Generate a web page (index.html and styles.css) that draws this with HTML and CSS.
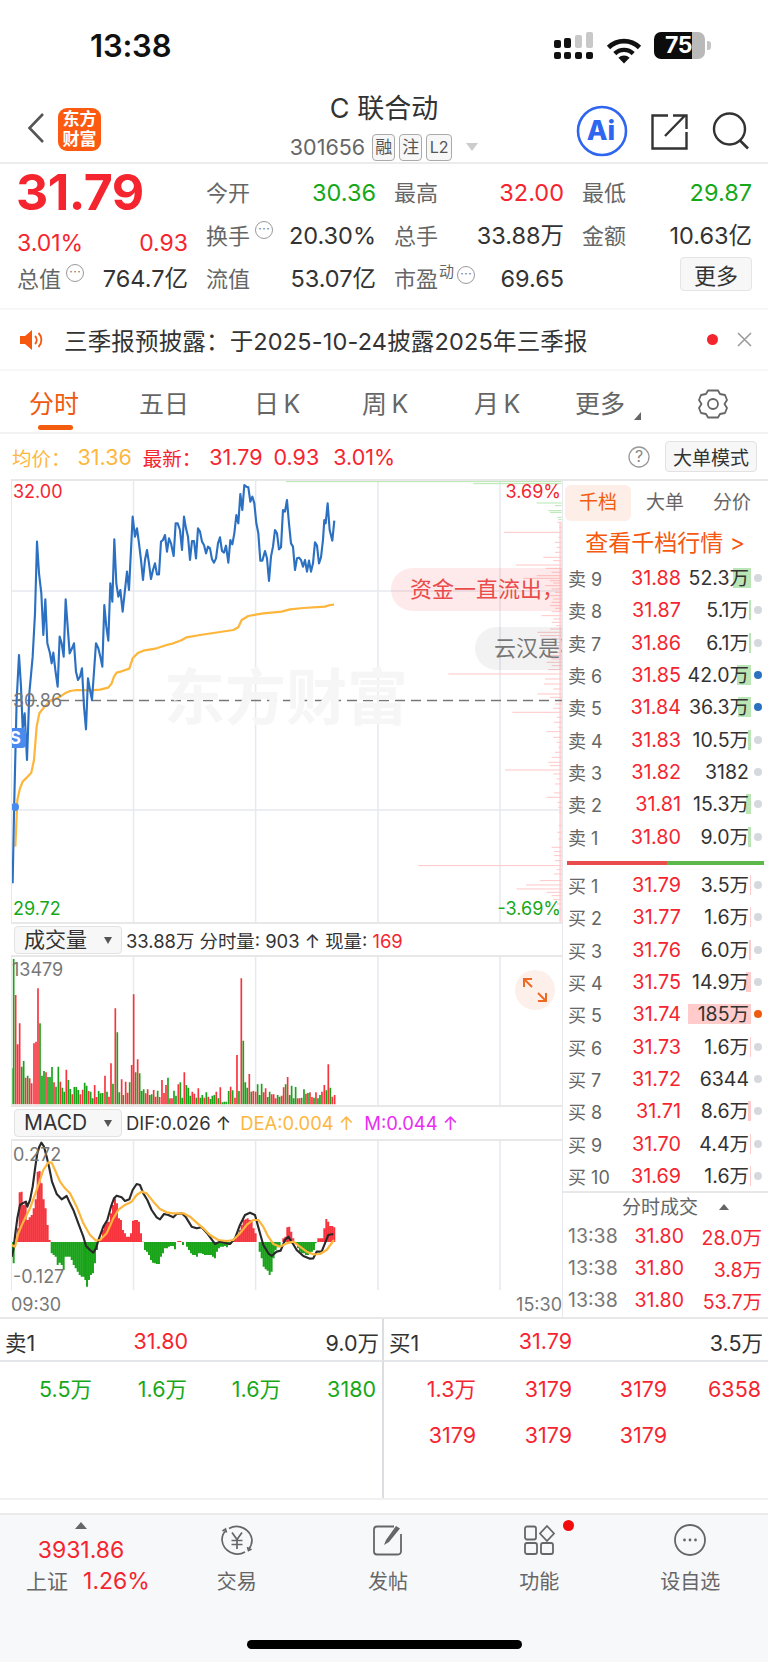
FILE: index.html
```html
<!DOCTYPE html>
<html lang="zh-CN">
<head>
<meta charset="utf-8">
<title>C联合动</title>
<link rel="stylesheet" href="styles.css">
</head>
<body>
<div class="page">

<header class="status">
  <div class="clock">13:38</div>
  <div class="status-icons">
    <svg class="signal" width="40" height="28" viewBox="0 0 40 28"><g fill="#111"><rect x="0" y="8" width="7" height="8" rx="2"/><rect x="10" y="6" width="7" height="10" rx="2"/><rect x="0" y="20" width="7" height="7" rx="2"/><rect x="10" y="20" width="7" height="7" rx="2"/><rect x="21" y="20" width="7" height="7" rx="2"/><rect x="32" y="20" width="7" height="7" rx="2"/></g><g fill="#c8c8c8"><rect x="21" y="3" width="7" height="13" rx="2"/><rect x="32" y="0" width="7" height="16" rx="2"/></g></svg>
    <svg class="wifi" width="36" height="26" viewBox="0 0 36 26"><path d="M2.500 9.500a22 22 0 0 1 31 0" fill="none" stroke="#111" stroke-width="4.600"/><path d="M8.800 15.600a13.200 13.200 0 0 1 18.400 0" fill="none" stroke="#111" stroke-width="4.400"/><path d="M18 25.500l-5.600-5.800a8 8 0 0 1 11.200 0z" fill="#111"/></svg>
    <div class="battery"><div class="battery-body"><span class="battery-num">75</span></div><i class="battery-nub"></i></div>
  </div>
</header>

<nav class="nav">
  <div class="nav-left">
    <svg class="back" width="18" height="32" viewBox="0 0 18 32"><path d="M16 2L2.500 16 16 30" fill="none" stroke="#555" stroke-width="2.600"/></svg>
    <div class="logo">东方<br>财富</div>
  </div>
  <div class="nav-title">
    <div class="title">C 联合动</div>
    <div class="subtitle"><span class="code">301656</span><span class="tag">融</span><span class="tag">注</span><span class="tag">L2</span><i class="sub-caret"></i></div>
  </div>
  <div class="nav-right">
    <svg class="ai" width="52" height="52" viewBox="0 0 52 52"><circle cx="26" cy="26" r="24" fill="#fff" stroke="#2f66f0" stroke-width="2.600"/><text x="25" y="35" text-anchor="middle" class="ai-text">Ai</text></svg>
    <svg class="share" width="37" height="37" viewBox="0 0 37 37"><path d="M17 2.500H1.500v33h34V19" fill="none" stroke="#333" stroke-width="2.400"/><path d="M14 23L33.500 3M22 2.500h13.500V16" fill="none" stroke="#333" stroke-width="2.400"/></svg>
    <svg class="search" width="38" height="38" viewBox="0 0 38 38"><circle cx="17.500" cy="17" r="15.500" fill="none" stroke="#333" stroke-width="2.400"/><path d="M28 28.500l8 8" fill="none" stroke="#333" stroke-width="2.600"/></svg>
  </div>
</nav>

<section class="quote">
  <div class="quote-left">
    <div class="big-price">31.79</div>
    <div class="change-row"><span>3.01%</span><span>0.93</span></div>
    <div class="q-cell cap-row"><span class="q-label">总值<i class="more-dot">⋯</i></span><span class="q-value">764.7亿</span></div>
  </div>
  <div class="quote-grid">
    <div class="q-cell"><span class="q-label">今开</span><span class="q-value up-green">30.36</span></div>
    <div class="q-cell"><span class="q-label">最高</span><span class="q-value down-red">32.00</span></div>
    <div class="q-cell"><span class="q-label">最低</span><span class="q-value up-green">29.87</span></div>
    <div class="q-cell"><span class="q-label">换手<i class="more-dot">⋯</i></span><span class="q-value">20.30%</span></div>
    <div class="q-cell"><span class="q-label">总手</span><span class="q-value">33.88万</span></div>
    <div class="q-cell"><span class="q-label">金额</span><span class="q-value">10.63亿</span></div>
    <div class="q-cell"><span class="q-label">流值</span><span class="q-value">53.07亿</span></div>
    <div class="q-cell"><span class="q-label">市盈<sup class="dyn">动</sup><i class="more-dot">⋯</i></span><span class="q-value">69.65</span></div>
    <div class="q-cell q-end"><button class="more-btn">更多</button></div>
  </div>
</section>

<section class="notice">
  <svg class="speaker" width="24" height="22" viewBox="0 0 24 22"><path d="M0 7h5l7-6v20l-7-6H0z" fill="#f4590f"/><path d="M15 7a5.500 5.500 0 0 1 0 8M18.500 4a10 10 0 0 1 0 14" fill="none" stroke="#f4590f" stroke-width="1.800"/></svg>
  <div class="notice-text">三季报预披露：于2025-10-24披露2025年三季报</div>
  <i class="notice-dot"></i>
  <svg class="notice-x" width="15" height="15" viewBox="0 0 15 15"><path d="M1 1l13 13M14 1L1 14" stroke="#999" stroke-width="1.500"/></svg>
</section>

<section class="tabs">
  <div class="tab tab-active tab-a">分时<i class="tab-line"></i></div>
  <div class="tab tab-b">五日</div>
  <div class="tab tab-c">日&#8201;K</div>
  <div class="tab tab-d">周&#8201;K</div>
  <div class="tab tab-e">月&#8201;K</div>
  <div class="tab tab-f">更多<i class="tab-tri"></i></div>
  <svg class="gear" width="30" height="32" viewBox="0 0 30 32"><path d="M10 2.500h10l2 3.500 5 1 2 5-2.500 4 2.500 4-2 5-5 1-2 3.500H10l-2-3.500-5-1-2-5 2.500-4L1 12l2-5 5-1z" fill="none" stroke="#666" stroke-width="1.800" stroke-linejoin="round"/><circle cx="15" cy="16" r="5" fill="none" stroke="#666" stroke-width="1.800"/></svg>
</section>

<section class="detail">
  <span class="avg">均价：</span><span class="avg d-avg">31.36</span>
  <span class="red d-new">最新：</span><span class="red d-last">31.79</span><span class="red d-val">0.93</span><span class="red d-val d-pct">3.01%</span>
  <svg class="help" width="22" height="22" viewBox="0 0 22 22"><circle cx="11" cy="11" r="10" fill="none" stroke="#999" stroke-width="1.300"/><text x="11" y="16" text-anchor="middle" class="help-text">?</text></svg>
  <button class="big-btn">大单模式</button>
</section>

<main class="main">
  <div class="charts">
    <div class="pane price-pane">
      <div class="watermark">东方财富</div>
      <svg class="plot" width="551" height="441" viewBox="11 481 551 441">
        <g class="grid"><path d="M133.500 481V922M255.600 481V922M378 481V922M500 481V922M11 591H562M11 810H562"/></g>
        <g transform="translate(420 479) scale(.3333)">
          <rect x="418" y="130" width="7" height="1200" fill="#ffd5d5"/>
          <path class="depth-green" d="M-402 8H425M160 14H425M350 72H425M405 80H425M385 95H425M390 100H425M412 115H425M415 122H425"/>
          <path class="depth-red" d="M412 130H425M418 145H425M252 160H425M415 175H425M405 190H425M410 205H425M405 220H425M370 235H425M400 245H425M288 258H425M378 268H425M395 280H425M350 290H425M310 298H425M390 305H425M400 312H425M375 320H425M395 330H425M405 340H425M392 350H425M400 360H425M395 370H425M390 380H425M405 388H425M395 398H425M365 410H425M400 420H425M395 430H425M408 440H425M390 450H425M352 460H425M360 470H425M395 480H425M375 490H425M395 500H425M405 510H425M390 520H425M375 530H425M395 540H425M380 550H425M395 560H425M385 572H425M85 585H425M375 600H425M372 615H425M400 630H425M352 645H425M390 655H425M405 675H425M400 688H425M277 700H425M410 715H425M402 730H425M415 745H425M380 758H425M400 775H425M410 790H425M415 805H425M405 820H425M395 835H425M385 850H425M390 860H425M255 873H425M400 885H425M410 900H425M405 915H425M402 942H425M380 955H425M412 970H425M415 985H425M418 1000H425M416 1040H425M412 1060H425M415 1080H425M395 1105H425M402 1118H425M402 1130H425M405 1145H425M-5 1160H425M410 1172H425M402 1185H425M360 1205H425M318 1218H425M290 1230H425M380 1240H425M395 1250H425M400 1262H425M410 1275H425M415 1290H425"/>
        </g>
        <path class="base-dash" d="M11 700.500H562"/>
        <g transform="translate(10 480) scale(.3333)">
          <path class="orange-line" d="M16 1100 22 960 30 925 38 905 50 893 64 878 72 840 80 740 88 700 100 685 120 663 150 650 165 640 180 633 200 630 240 631 270 629 295 623 305 610 312 590 320 578 335 574 358 566 368 535 385 518 400 512 440 505 470 495 490 490 510 482"/>
          <path class="blue-line" d="M8 1210 12 1000 16 830 20 660 27 525 33 620 38 745 44 700 51 840 58 640 68 530 75 400 81 185 87 280 94 340 100 465 106 358 112 490 120 520 125 550 130 518 136 570 143 620 149 470 155 490 161 530 167 358 173 440 179 520 186 505 192 490 198 575 204 600 210 590 216 565 222 680 228 748 234 595 240 630 246 660 258 490 265 505 271 530 277 560 283 375 289 440 295 482 301 310 307 365 313 178 319 310 325 350 331 330 338 395 345 330 351 275 357 330 368 110 375 170 381 145 387 190 393 240 399 300 405 240 411 210 417 250 423 297 429 270 435 250 441 283 447 283 453 185 459 180 465 165 471 215 477 175 483 190 491 228 497 130 503 130 510 150"/>
        </g>
        <g transform="translate(170 480) scale(.3333)">
          <path class="orange-line" d="M30 483 50 472 90 465 150 456 190 450 205 442 215 420 235 408 280 400 335 395 360 388 400 384 465 380 480 375 492 374"/>
          <path class="blue-line" d="M30 150 36 210 42 110 48 145 54 170 60 240 66 183 72 183 78 235 84 145 90 155 96 185 102 195 108 220 114 200 120 205 126 238 132 248 138 235 144 190 150 172 156 213 162 218 168 197 175 248 181 180 187 193 193 160 199 105 205 130 211 42 217 90 223 15 229 20 235 22 241 65 247 50 253 70 259 130 265 160 271 242 277 242 285 213 291 235 297 303 303 230 309 200 315 150 321 160 327 208 333 202 339 90 345 95 351 60 357 130 363 190 369 200 375 270 381 235 387 233 393 240 399 260 405 240 411 275 417 242 423 275 429 250 435 187 441 197 447 250 453 232 459 180 463 120 467 130 473 70 479 150 487 182 493 122"/>
        </g>
        <circle cx="15" cy="807" r="4" fill="#4a8bf0"/>
      </svg>
      <div class="axis-label red-label al-tl">32.00</div>
      <div class="axis-label red-label al-tr">3.69%</div>
      <div class="axis-label gray-label al-mid">30.86</div>
      <div class="axis-label green-label al-bl">29.72</div>
      <div class="axis-label green-label al-br">-3.69%</div>
      <div class="s-badge">S</div>
      <div class="pill pill-red">资金一直流出，主力</div>
      <div class="pill pill-gray">云汉是不是</div>
    </div>

    <div class="sub-head">
      <div class="select">成交量<i class="select-caret"></i></div>
      <div class="sub-info">33.88万 分时量: 903 ↑ 现量: <span class="red">169</span></div>
    </div>
    <div class="pane vol-pane">
      <svg class="plot" width="551" height="148" viewBox="11 957 551 148">
        <g class="grid"><path d="M133.500 957V1105M255.600 957V1105M378 957V1105M500 957V1105"/></g>
        <g transform="translate(10 955) scale(.3333)">
          <path class="bar-g" d="M5 340V448M11 12V448M35 335V448M41 318V448M53 362V448M90 205V448M96 362V448M102 348V448M114 366V448M120 366V448M126 336V448M138 395V448M145 335V448M157 398V448M163 410V448M175 375V448M181 402V448M193 396V448M199 396V448M205 405V448M224 383V448M230 392V448M242 410V448M248 430V448M266 408V448M272 415V448M278 414V448M291 410V448M309 386V448M322 232V448M328 412V448M340 420V448M359 382V448M377 352V448M389 355V448M395 408V448M401 403V448M419 420V448M425 418V448M443 407V448M474 368V448M492 407V448M498 422V448M511 382V448M517 428V448M529 390V448M535 398V448M541 422V448M559 428V448M571 428V448M577 420V448M589 412V448M601 432V448M607 422V448M613 420V448M625 430V448M637 442V448M643 440V448M649 440V448M656 408V448M668 406V448M687 408V448M700 257V448M706 382V448M712 398V448M724 410V448M743 388V448M749 420V448M755 386V448M773 426V448M779 410V448M803 420V448M809 425V448M827 388V448M839 420V448M845 392V448M851 430V448M857 396V448M875 428V448M882 403V448M894 414V448M912 428V448M924 430V448M930 420V448M949 406V448M961 398V448"/>
          <path class="bar-r" d="M17 120V448M23 268V448M29 205V448M47 368V448M59 370V448M65 385V448M72 265V448M78 260V448M84 100V448M108 352V448M132 382V448M151 380V448M169 344V448M187 418V448M211 418V448M218 404V448M236 408V448M254 390V448M260 426V448M285 362V448M297 425V448M303 325V448M316 160V448M335 373V448M347 380V448M353 413V448M365 330V448M371 118V448M383 313V448M407 415V448M413 403V448M431 405V448M437 425V448M449 426V448M456 375V448M462 414V448M468 390V448M480 430V448M486 430V448M505 388V448M523 352V448M547 410V448M553 416V448M565 400V448M583 428V448M595 425V448M619 410V448M631 397V448M662 395V448M675 428V448M681 300V448M694 70V448M718 357V448M730 408V448M737 410V448M761 412V448M767 400V448M785 418V448M791 418V448M797 430V448M815 422V448M821 397V448M833 366V448M863 430V448M869 430V448M888 416V448M900 412V448M906 426V448M918 412V448M936 410V448M943 390V448M955 328V448M967 425V448M974 420V448"/>
        </g>
      </svg>
      <div class="axis-label gray-label al-vol">13479</div>
      <div class="expand">
        <svg width="24" height="24" viewBox="0 0 24 24"><path d="M1 9V1h8M1 1l8 8M23 15v8h-8M23 23l-8-8" fill="none" stroke="#ee6a24" stroke-width="2"/></svg>
      </div>
    </div>

    <div class="sub-head sub-head-macd">
      <div class="select">MACD<i class="select-caret"></i></div>
      <div class="sub-info">DIF:0.026 ↑ <span class="avg mi">DEA:0.004 ↑</span> <span class="magenta mi-m">M:0.044 ↑</span></div>
    </div>
    <div class="pane macd-pane">
      <svg class="plot" width="551" height="149" viewBox="11 1141 551 149">
        <g class="grid"><path d="M133.500 1141V1290M255.600 1141V1290M378 1141V1290M500 1141V1290"/></g>
        <g transform="translate(10 1140) scale(.3333)">
          <path class="hist-g" d="M5 306V350M11 306V370M125 306V340M131 306V345M137 306V350M143 306V375M149 306V368M155 306V375M161 306V390M167 306V350M173 306V350M179 306V350M185 306V360M191 306V375M197 306V385M203 306V395M209 306V405M215 306V410M221 306V410M226 306V420M231 306V440M237 306V420M243 306V405M249 306V400M255 306V370M261 306V330M405 306V330M411 306V335M417 306V345M423 306V360M429 306V368M435 306V370M441 306V372M447 306V372M453 306V350M459 306V340M465 306V325M471 306V325M477 306V320M483 306V318M489 306V318M495 306V328M519 306V315M531 306V320M537 306V330M543 306V340M549 306V345M555 306V345M561 306V350M567 306V340M573 306V340M579 306V342M585 306V345M591 306V345M597 306V345M603 306V345M609 306V350M615 306V355M621 306V335M627 306V325M633 306V320M639 306V320M645 306V318M651 306V322M657 306V315M663 306V312M749 306V335M755 306V355M761 306V380M767 306V388M773 306V392M779 306V405M785 306V395M791 306V355M797 306V330M803 306V322M809 306V320M858 306V310M864 306V325M870 306V335M876 306V340M882 306V340M888 306V345M894 306V345M900 306V340M906 306V335M912 306V330M917 306V310"/>
          <path class="hist-r" d="M23 306V265M29 306V157M35 306V155M41 306V195M47 306V185M53 306V240M59 306V232M65 306V225M71 306V205M77 306V178M83 306V95M89 306V93M95 306V130M101 306V178M107 306V205M113 306V255M119 306V300M267 306V295M273 306V300M279 306V270M285 306V255M291 306V245M297 306V245M303 306V220M309 306V195M315 306V175M321 306V190M327 306V235M333 306V240M339 306V270M345 306V280M351 306V290M357 306V290M363 306V280M369 306V242M375 306V240M381 306V240M387 306V245M393 306V280M399 306V305M505 306V303M511 306V303M671 306V300M677 306V295M683 306V282M689 306V270M695 306V255M701 306V240M707 306V238M713 306V235M719 306V240M725 306V240M731 306V265M737 306V280M820 306V295M826 306V290M832 306V262M838 306V260M844 306V275M850 306V295M925 306V295M931 306V295M937 306V295M943 306V265M949 306V237M955 306V245M961 306V258M967 306V258M973 306V262"/>
          <path class="macd-black" d="M5 350 10 330 16 280 22 235 30 195 38 190 48 185 52 200 60 180 68 140 76 80 82 40 88 20 94 8 102 20 110 50 118 85 126 125 140 162 155 178 170 168 180 190 190 210 205 250 220 290 228 318 240 330 250 338 258 325 266 298 280 260 292 240 303 200 312 175 320 167 335 172 345 183 358 178 368 150 380 132 390 135 400 160 412 180 425 210 440 232 450 238 462 222 475 225 490 232 500 222 515 220 528 232 545 260 560 265 575 262 590 278 605 298 615 312 630 305 650 310 660 312 675 295 690 255 705 225 720 218 735 225 750 280 760 315 775 340 785 348 800 335 812 332 825 300 835 290 848 310 860 330 880 348 900 356 910 355 920 335 935 335 945 310 955 285 970 282"/>
          <path class="orange-line" d="M5 315 15 320 25 280 40 245 60 205 80 150 100 90 115 67 125 68 135 90 150 125 165 145 180 160 200 200 220 250 240 285 258 302 270 300 290 280 310 235 325 210 345 195 365 185 380 165 395 155 410 160 430 185 450 207 470 217 490 220 520 220 540 230 560 248 580 265 600 285 625 300 650 303 670 300 690 280 710 255 730 240 745 240 760 260 775 290 790 312 810 320 830 310 850 305 870 320 890 335 910 343 930 342 950 330 972 300"/>
        </g>
      </svg>
      <div class="axis-label gray-label al-macd-t">0.272</div>
      <div class="axis-label gray-label al-macd-b">-0.127</div>
    </div>
    <div class="time-axis"><span>09:30</span><span>15:30</span></div>
  </div>

  <aside class="book">
    <div class="book-tabs">
      <div class="book-tab book-tab-on">千档</div>
      <div class="book-tab">大单</div>
      <div class="book-tab">分价</div>
    </div>
    <div class="book-link">查看千档行情 &gt;</div>
    <div class="levels">
      <div class="level"><span class="lv-name">卖 9</span><span class="lv-price">31.88</span><span class="lv-vol"><i class="lv-bar ask" style="width:18px"></i><b>52.3万</b></span><i class="lv-dot"></i></div>
      <div class="level"><span class="lv-name">卖 8</span><span class="lv-price">31.87</span><span class="lv-vol"><i class="lv-bar ask" style="width:2px"></i><b>5.1万</b></span><i class="lv-dot"></i></div>
      <div class="level"><span class="lv-name">卖 7</span><span class="lv-price">31.86</span><span class="lv-vol"><i class="lv-bar ask" style="width:2px"></i><b>6.1万</b></span><i class="lv-dot"></i></div>
      <div class="level"><span class="lv-name">卖 6</span><span class="lv-price">31.85</span><span class="lv-vol"><i class="lv-bar ask" style="width:14px"></i><b>42.0万</b></span><i class="lv-dot lv-blue"></i></div>
      <div class="level"><span class="lv-name">卖 5</span><span class="lv-price">31.84</span><span class="lv-vol"><i class="lv-bar ask" style="width:13px"></i><b>36.3万</b></span><i class="lv-dot lv-blue"></i></div>
      <div class="level"><span class="lv-name">卖 4</span><span class="lv-price">31.83</span><span class="lv-vol"><i class="lv-bar ask" style="width:3px"></i><b>10.5万</b></span><i class="lv-dot"></i></div>
      <div class="level"><span class="lv-name">卖 3</span><span class="lv-price">31.82</span><span class="lv-vol"><b>3182</b></span><i class="lv-dot"></i></div>
      <div class="level"><span class="lv-name">卖 2</span><span class="lv-price">31.81</span><span class="lv-vol"><i class="lv-bar ask" style="width:5px"></i><b>15.3万</b></span><i class="lv-dot"></i></div>
      <div class="level"><span class="lv-name">卖 1</span><span class="lv-price">31.80</span><span class="lv-vol"><i class="lv-bar ask" style="width:3px"></i><b>9.0万</b></span><i class="lv-dot"></i></div>
    </div>
    <div class="ratio"><i class="ratio-red"></i><i class="ratio-green"></i></div>
    <div class="levels levels-buy">
      <div class="level"><span class="lv-name">买 1</span><span class="lv-price">31.79</span><span class="lv-vol"><i class="lv-bar bid" style="width:1px"></i><b>3.5万</b></span><i class="lv-dot"></i></div>
      <div class="level"><span class="lv-name">买 2</span><span class="lv-price">31.77</span><span class="lv-vol"><i class="lv-bar bid" style="width:1px"></i><b>1.6万</b></span><i class="lv-dot"></i></div>
      <div class="level"><span class="lv-name">买 3</span><span class="lv-price">31.76</span><span class="lv-vol"><i class="lv-bar bid" style="width:2px"></i><b>6.0万</b></span><i class="lv-dot"></i></div>
      <div class="level"><span class="lv-name">买 4</span><span class="lv-price">31.75</span><span class="lv-vol"><i class="lv-bar bid" style="width:5px"></i><b>14.9万</b></span><i class="lv-dot"></i></div>
      <div class="level"><span class="lv-name">买 5</span><span class="lv-price">31.74</span><span class="lv-vol"><i class="lv-bar bid" style="width:63px"></i><b>185万</b></span><i class="lv-dot lv-orange"></i></div>
      <div class="level"><span class="lv-name">买 6</span><span class="lv-price">31.73</span><span class="lv-vol"><i class="lv-bar bid" style="width:1px"></i><b>1.6万</b></span><i class="lv-dot"></i></div>
      <div class="level"><span class="lv-name">买 7</span><span class="lv-price">31.72</span><span class="lv-vol"><b>6344</b></span><i class="lv-dot"></i></div>
      <div class="level"><span class="lv-name">买 8</span><span class="lv-price">31.71</span><span class="lv-vol"><i class="lv-bar bid" style="width:3px"></i><b>8.6万</b></span><i class="lv-dot"></i></div>
      <div class="level"><span class="lv-name">买 9</span><span class="lv-price">31.70</span><span class="lv-vol"><i class="lv-bar bid" style="width:1px"></i><b>4.4万</b></span><i class="lv-dot"></i></div>
      <div class="level"><span class="lv-name">买 10</span><span class="lv-price">31.69</span><span class="lv-vol"><i class="lv-bar bid" style="width:1px"></i><b>1.6万</b></span><i class="lv-dot"></i></div>
    </div>
    <div class="trades-head">分时成交<i class="trades-caret"></i></div>
    <div class="trade"><span class="tr-time">13:38</span><span class="tr-price">31.80</span><span class="tr-vol">28.0万</span></div>
    <div class="trade"><span class="tr-time">13:38</span><span class="tr-price">31.80</span><span class="tr-vol">3.8万</span></div>
    <div class="trade"><span class="tr-time">13:38</span><span class="tr-price">31.80</span><span class="tr-vol">53.7万</span></div>
  </aside>
</main>

<section class="ticks">
  <div class="tick-side tick-left">
    <div class="tick-top"><span class="tk-name">卖1</span><span class="tk-price">31.80</span><span class="tk-vol">9.0万</span></div>
    <div class="tick-cells cells-left green-text">
      <span>5.5万</span><span>1.6万</span><span>1.6万</span><span>3180</span>
    </div>
  </div>
  <div class="tick-side tick-right">
    <div class="tick-top"><span class="tk-name">买1</span><span class="tk-price">31.79</span><span class="tk-vol">3.5万</span></div>
    <div class="tick-cells cells-right red-text">
      <span>1.3万</span><span>3179</span><span>3179</span><span>6358</span>
      <span>3179</span><span>3179</span><span>3179</span>
    </div>
  </div>
</section>

<footer class="tabbar">
  <div class="bar-items">
    <div class="bar-item index-item">
      <i class="index-caret"></i>
      <div class="index-value">3931.86</div>
      <div class="index-name"><span>上证</span><span class="red index-pct">1.26%</span></div>
    </div>
    <div class="bar-item">
      <svg class="bar-icon" width="36" height="34" viewBox="0 0 36 34"><path d="M10 5.500A15.500 15.500 0 0 1 33 17c0 4-1.500 7-3.500 9.500M26 29a15.500 15.500 0 0 1-23-12c0-4 1.500-7 3.500-9" fill="none" stroke="#666" stroke-width="1.700"/><path d="M3.500 8l3-2 1 3.500M32.500 26l-3 1.500-1-3.500" fill="none" stroke="#666" stroke-width="1.700"/><path d="M13 9.500l5 7 5-7M12.500 17.500h11M12.500 21.500h11M18 16.500V26" fill="none" stroke="#666" stroke-width="1.700"/></svg>
      <div class="bar-label">交易</div>
    </div>
    <div class="bar-item">
      <svg class="bar-icon" width="36" height="34" viewBox="0 0 36 34"><path d="M24 3.500H7a3 3 0 0 0-3 3v22a3 3 0 0 0 3 3h21a3 3 0 0 0 3-3V11" fill="none" stroke="#666" stroke-width="1.800"/><path d="M14 22l2-5L26 3l4 2.500L19 19z" fill="#666"/></svg>
      <div class="bar-label">发帖</div>
    </div>
    <div class="bar-item">
      <svg class="bar-icon" width="34" height="34" viewBox="0 0 34 34"><g fill="none" stroke="#666" stroke-width="1.800"><rect x="3" y="3.500" width="11" height="13" rx="2"/><path d="M25 3l7 7.500-7 7.500-7-7.500z"/><rect x="3" y="20" width="12" height="11" rx="2"/><rect x="19" y="20" width="12" height="11" rx="2"/></g></svg>
      <i class="bar-dot"></i>
      <div class="bar-label">功能</div>
    </div>
    <div class="bar-item">
      <svg class="bar-icon" width="34" height="34" viewBox="0 0 34 34"><circle cx="17" cy="17" r="15" fill="none" stroke="#666" stroke-width="1.800"/><g fill="#666"><circle cx="11.500" cy="17" r="1.400"/><circle cx="17" cy="17" r="1.400"/><circle cx="22.500" cy="17" r="1.400"/></g></svg>
      <div class="bar-label">设自选</div>
    </div>
  </div>
  <div class="home-indicator"></div>
</footer>

</div>
</body>
</html>
```
FILE: styles.css
```css
* { box-sizing: border-box; }
html, body { margin: 0; padding: 0; background: #fff; }
body { font-family: Inter, "Noto Sans CJK SC", "Liberation Sans", sans-serif; color: #333; }
.page { width: 768px; height: 1662px; overflow: hidden; display: flex; flex-direction: column; }
i { font-style: normal; display: block; }
.red { color: #f5252f; }
.avg { color: #fdb73e; }
.magenta { color: #e92ef2; }
.up-green { color: #17a81a; }
.down-red { color: #f5252f; }

/* status bar */
.status { height: 92px; flex: none; display: flex; justify-content: space-between; padding: 32px 57px 0 90px; }
.clock { font-size: 31px; font-weight: 600; line-height: 28px; color: #111; letter-spacing: -.2px; }
.status-icons { display: flex; align-items: flex-start; }
.wifi { margin: 6px 0 0 12px; }
.battery { display: flex; align-items: center; margin-left: 12px; height: 27px; }
.battery-body { width: 51px; height: 27px; border-radius: 7px; background: linear-gradient(90deg, #0c0c0c 75%, #b9b9b9 75%); color: #fff; font-size: 23px; font-weight: 700; line-height: 27px; text-align: center; padding-right: 2px; }
.battery-num { letter-spacing: -.5px; }
.battery-nub { width: 4px; height: 9px; margin-left: 2px; border-radius: 0 3px 3px 0; background: #c4c4c4; }

/* navigation */
.nav { height: 72px; flex: none; display: grid; grid-template-columns: 1fr auto 1fr; border-bottom: 2px solid #ececec; }
.nav-left { display: flex; align-items: center; padding: 0 0 0 27px; }
.back { margin-top: 1px; }
.logo { width: 43px; height: 43px; margin: 5px 0 0 13px; border-radius: 9px; background: #fb5a10; color: #fff; font-size: 17px; font-weight: 700; line-height: 20px; text-align: center; padding-top: 1px; }
.nav-title { display: flex; flex-direction: column; align-items: center; }
.title { font-size: 27px; line-height: 32px; margin-top: 1px; color: #333; }
.subtitle { display: flex; align-items: center; margin-top: 8px; }
.code { font-size: 21.500px; color: #666; margin-right: 7px; line-height: 28px; }
.tag { width: 23px; height: 27px; margin-right: 4px; border: 1px solid #aaa; border-radius: 4px; background: #f7f7f7; font-size: 17px; line-height: 25px; text-align: center; color: #555; }
.tag:nth-of-type(4) { width: 26px; font-size: 16px; }
.sub-caret { width: 0; height: 0; margin-left: 10px; border: 6px solid transparent; border-top: 8px solid #ccc; border-bottom: 0; }
.nav-right { display: flex; align-items: center; padding: 12px 18px 0 0; justify-content: flex-end; }
.ai-text { font-size: 27px; font-weight: 800; fill: #2f66f0; }
.ai { margin: -5px 23px 0 0; }
.share { margin: -4px 24px 0 0; }
.search { margin-top: -4px; }

/* quote */
.quote { height: 144px; flex: none; display: flex; padding-left: 17px; }
.quote-left { width: 171px; flex: none; }
.big-price { font-size: 50px; font-weight: 700; color: #f5252f; height: 60px; line-height: 56px; letter-spacing: -.5px; margin-left: -1px; }
.change-row { display: flex; justify-content: space-between; font-size: 23px; line-height: 38px; color: #f5252f; }
.quote-grid { margin-left: 18px; padding-top: 7px; display: grid; grid-template-columns: 170px 170px 170px; column-gap: 18px; grid-template-rows: 44px 42px 44px; }
.q-cell { display: flex; justify-content: space-between; align-items: center; font-size: 22px; }
.cap-row { height: 32px; margin-top: 1px; }
.q-label { display: flex; color: #666; line-height: 30px; position: relative; }
.q-value { color: #333; line-height: 30px; font-size: 23.500px; }
.q-value.up-green { color: #17a81a; }
.q-value.down-red { color: #f5252f; }
.more-dot { width: 18px; height: 18px; margin: 0 0 0 5px; border: 1.300px solid #999; border-radius: 50%; font-size: 12px; line-height: 15px; text-align: center; color: #777; }
.dyn { font-size: 15px; line-height: 15px; margin: 0 0 0 1px; height: 16px; color: #666; }
.dyn + .more-dot { margin-left: 3px; margin-top: 2px; }
.q-end { justify-content: flex-end; align-items: flex-start; }
.more-btn { width: 72px; height: 34px; margin-top: 0; padding: 0; border: 1px solid #e4e4e4; border-radius: 4px; background: #f7f7f8; font: inherit; font-size: 22px; color: #333; }

/* notice */
.notice { height: 63px; flex: none; display: flex; align-items: center; padding-left: 20px; border-top: 2px solid #f7f7f7; border-bottom: 2px solid #f7f7f7; }
.notice-text { margin-left: 20px; font-size: 23.500px; color: #333; width: 642px; letter-spacing: .17px; white-space: nowrap; }
.notice-dot { width: 11px; height: 11px; border-radius: 50%; background: #f5252f; margin-left: 1px; }
.notice-x { margin-left: 19px; }

/* tabs */
.tabs { height: 63px; flex: none; display: flex; align-items: center; border-bottom: 2px solid #f3f3f3; position: relative; padding-top: 5px; }
.tab { font-size: 25px; color: #666; position: relative; line-height: 34px; width: 50px; white-space: nowrap; }
.tab-a { margin-left: 29px; color: #ee5a10; }
.tab-b { margin-left: 60px; }
.tab-c { margin-left: 65px; }
.tab-d { margin-left: 58px; }
.tab-e { margin-left: 62px; }
.tab-f { margin-left: 51px; }
.tab-line { position: absolute; left: 9px; bottom: -9px; width: 35px; height: 5px; border-radius: 3px; background: #f25c0c; }
.tab-tri { position: absolute; left: 59px; bottom: 1px; width: 0; height: 0; border-style: solid; border-width: 0 0 8px 7px; border-color: transparent transparent #666 transparent; }
.gear { margin-left: 73px; }

/* detail */
.detail { height: 45px; flex: none; display: flex; align-items: center; padding-left: 12px; font-size: 19.500px; padding-top: 1px; }
.d-avg { margin-left: 7px; font-size: 21.500px; }
.d-new { margin-left: 11px; }
.d-last { margin-left: 8px; font-size: 21.500px; }
.d-val { margin-left: 11px; font-size: 21.500px; }
.d-pct { margin-left: 14px; }
.help { margin-left: auto; }
.help-text { font-size: 16px; fill: #888; }
.big-btn { width: 92px; height: 31px; margin: -1px 11px 0 15px; padding: 0; border: 1px solid #e2e2e2; border-radius: 4px; background: #f7f7f8; font: inherit; font-size: 19px; color: #333; }

/* main */
.main { height: 838px; flex: none; display: flex; }
.charts { width: 562px; flex: none; padding-left: 11px; }
.pane { position: relative; overflow: hidden; border-left: 1px solid #e6e8ee; }
.plot { display: block; margin-left: -1px; }
.grid path { fill: none; stroke: #e6e9f0; stroke-width: 1.500; }
.price-pane { height: 443px; border-top: 2px solid #e8e8e8; }
.vol-pane { height: 148px; }
.macd-pane { height: 149px; }
.blue-line { fill: none; stroke: #2c70c2; stroke-width: 6.400; stroke-linejoin: round; }
.orange-line { fill: none; stroke: #fdb53a; stroke-width: 6.600; stroke-linejoin: round; }
.macd-black { fill: none; stroke: #2a2a2a; stroke-width: 6.400; stroke-linejoin: round; }
.base-dash { fill: none; stroke: #777; stroke-width: 1.600; stroke-dasharray: 10 6; }
.depth-green { fill: none; stroke: #b4e6ae; stroke-width: 3; }
.depth-red { fill: none; stroke: #ffc6c6; stroke-width: 3; }
.bar-g { fill: none; stroke: #18a318; stroke-width: 5; }
.bar-r { fill: none; stroke: #f7333d; stroke-width: 5; }
.hist-g { fill: none; stroke: #18a318; stroke-width: 5.800; }
.hist-r { fill: none; stroke: #f7333d; stroke-width: 5.800; }
.axis-label { position: absolute; font-size: 18px; line-height: 22px; }
.red-label { color: #f5252f; }
.green-label { color: #17a81a; }
.gray-label { color: #777; }
.al-tl { left: 1px; top: 0; }
.al-tr { right: 1px; top: 0; }
.al-mid { left: 1px; top: 209px; }
.al-bl { left: 1px; top: 417px; }
.al-br { right: 1px; top: 417px; }
.al-vol { left: 0; top: 2px; }
.al-macd-t { left: 1px; top: 3px; }
.al-macd-b { left: 1px; top: 125px; }
.watermark { position: absolute; left: 152px; top: 183px; font-size: 61px; font-weight: 700; line-height: 68px; color: #f6f6f6; white-space: nowrap; }
.pill { position: absolute; height: 43px; border-radius: 22px; font-size: 22px; line-height: 43px; white-space: nowrap; overflow: hidden; width: 260px; }
.pill-red { left: 379px; top: 87px; padding-left: 19px; background: rgba(244, 90, 90, .13); color: #ea4b4b; }
.pill-gray { left: 463px; top: 146px; padding-left: 19px; background: rgba(0, 0, 0, .05); color: #777; }
.s-badge { position: absolute; left: -8px; top: 247px; width: 22px; height: 20px; border-radius: 4px; background: #4a8bf0; color: #fff; font-size: 17px; font-weight: 700; line-height: 20px; text-align: right; padding-right: 5px; }
.expand { position: absolute; left: 503px; top: 13px; width: 40px; height: 40px; border-radius: 50%; background: #fdf0ea; display: flex; align-items: center; justify-content: center; }
.sub-head { height: 35px; display: flex; align-items: center; border-top: 2px solid #e8e8e8; border-bottom: 2px solid #e8e8e8; padding-left: 3px; }
.sub-head-macd { height: 36px; }
.select { position: relative; width: 108px; height: 28px; border: 1px solid #e2e2e2; border-radius: 4px; background: #f7f7f8; font-size: 21px; line-height: 26px; padding-left: 9px; color: #333; }
.select-caret { position: absolute; right: 9px; top: 10px; width: 0; height: 0; border: 4px solid transparent; border-top: 7px solid #555; border-bottom: 0; }
.sub-info { margin-left: 4px; font-size: 18.400px; color: #333; white-space: nowrap; }
.mi { margin-left: 4px; }
.mi-m { margin-left: 5px; }
.time-axis { height: 27px; display: flex; justify-content: space-between; font-size: 18px; line-height: 29px; color: #777; }

/* order book */
.book { width: 206px; flex: none; border-left: 1px solid #e6e8ee; }
.book-tabs { height: 48px; display: flex; padding: 4px 0 0 3px; border-top: 2px solid #e8e8e8; margin-left: -1px; }
.book-tab { width: 66px; height: 36px; margin-right: 1px; border-radius: 6px; font-size: 19px; line-height: 36px; text-align: center; color: #666; }
.book-tab-on { background: #fdeee8; color: #f25c0c; }
.book-link { height: 32px; margin-bottom: 3px; font-size: 23px; line-height: 32px; text-align: center; color: #f4590f; padding-right: 1px; white-space: nowrap; }
.level { display: grid; grid-template-columns: 52px 61px 68px 1fr; align-items: center; height: 32.340px; padding-left: 5px; font-size: 19.800px; }
.lv-name { color: #666; white-space: nowrap; font-size: 18px; }
.lv-price { color: #f5252f; text-align: right; }
.lv-vol { position: relative; display: block; text-align: right; color: #333; white-space: nowrap; font-size: 19.500px; line-height: 24px; }
.lv-vol b { position: relative; font-weight: 400; }
.lv-bar { position: absolute; right: -2px; top: 2px; height: 20px; }
.lv-bar.ask { background: #bce5b6; }
.lv-bar.bid { background: #ffcbcb; }
.lv-dot { width: 8px; height: 8px; margin-left: 5px; border-radius: 50%; background: #d5d8dd; }
.lv-blue { background: #2c70c2; }
.lv-orange { background: #ef5a0e; }
.ratio { display: flex; height: 4px; margin: 8px 4px 4px 4px; }
.ratio-red { width: 100px; background: #e94c4c; }
.ratio-green { flex: 1; background: #5cb848; }
.trades-head { position: relative; height: 29px; margin-top: -1px; border-top: 2px solid #e8e8e8; font-size: 19px; line-height: 29px; color: #666; text-align: center; padding-right: 11px; }
.trades-caret { position: absolute; left: 156px; top: 11px; width: 0; height: 0; border: 5px solid transparent; border-bottom: 6px solid #666; border-top: 0; }
.trade { display: grid; grid-template-columns: 56px 60px 78px; height: 32px; padding-left: 5px; align-items: center; font-size: 19.500px; color: #f5252f; }
.tr-time { color: #777; }
.tr-price, .tr-vol { text-align: right; white-space: nowrap; }

/* tick table */
.ticks { height: 183px; flex: none; display: flex; border-top: 2px solid #e8e8e8; border-bottom: 2px solid #f1f1f1; }
.tick-side { width: 384px; }
.tick-left { border-right: 2px solid #dcdde0; height: 179px; }
.tick-top { display: grid; grid-template-columns: 60px 123px 191px; align-items: center; height: 43px; padding-left: 5px; padding-top: 3px; border-bottom: 2px solid #e4e6ea; font-size: 21.500px; }
.tick-left .tick-top { margin-right: -1px; }
.tk-name { color: #333; }
.tk-price { text-align: right; color: #f5252f; }
.tk-vol { text-align: right; }
.tick-cells { display: grid; height: 92px; padding-top: 4px; font-size: 21.500px; line-height: 46px; text-align: right; }
.tick-cells span { white-space: nowrap; }
.cells-left { grid-template-columns: 92px 95px 94px 95px; }
.cells-right { grid-template-columns: 92px 96px 95px 94px; }
.green-text { color: #17a81a; }
.red-text { color: #f5252f; }

/* tab bar */
.tabbar { flex: 1; margin-top: 13px; background: #f7f8fa; border-top: 2px solid #eaeaea; display: flex; flex-direction: column; }
.bar-items { display: flex; padding: 0 0 0 11.500px; height: 88px; }
.bar-item { position: relative; width: 151.200px; display: flex; flex-direction: column; align-items: center; padding-top: 8px; }
.bar-icon { display: block; height: 34px; }
.bar-label { margin-top: 10px; font-size: 20px; line-height: 30px; color: #666; }
.bar-dot { position: absolute; left: 99px; top: 5px; width: 11px; height: 11px; border-radius: 50%; background: #f20d0d; }
.index-item { width: 142px; margin: 0 9.200px 0 -1.500px; padding-top: 0; flex: none; }
.index-caret { margin-top: 7px; width: 0; height: 0; border: 6px solid transparent; border-bottom: 7px solid #666; border-top: 0; }
.index-value { margin-top: 6px; font-size: 23px; line-height: 30px; color: #f5252f; }
.index-name { display: flex; margin: 1px 0 0 14px; font-size: 21px; line-height: 31px; color: #666; align-items: center; white-space: nowrap; }
.index-pct { margin-left: 15px; font-size: 23px; }
.home-indicator { width: 275px; height: 9px; margin: 37px auto 0; border-radius: 5px; background: #000; }
```
